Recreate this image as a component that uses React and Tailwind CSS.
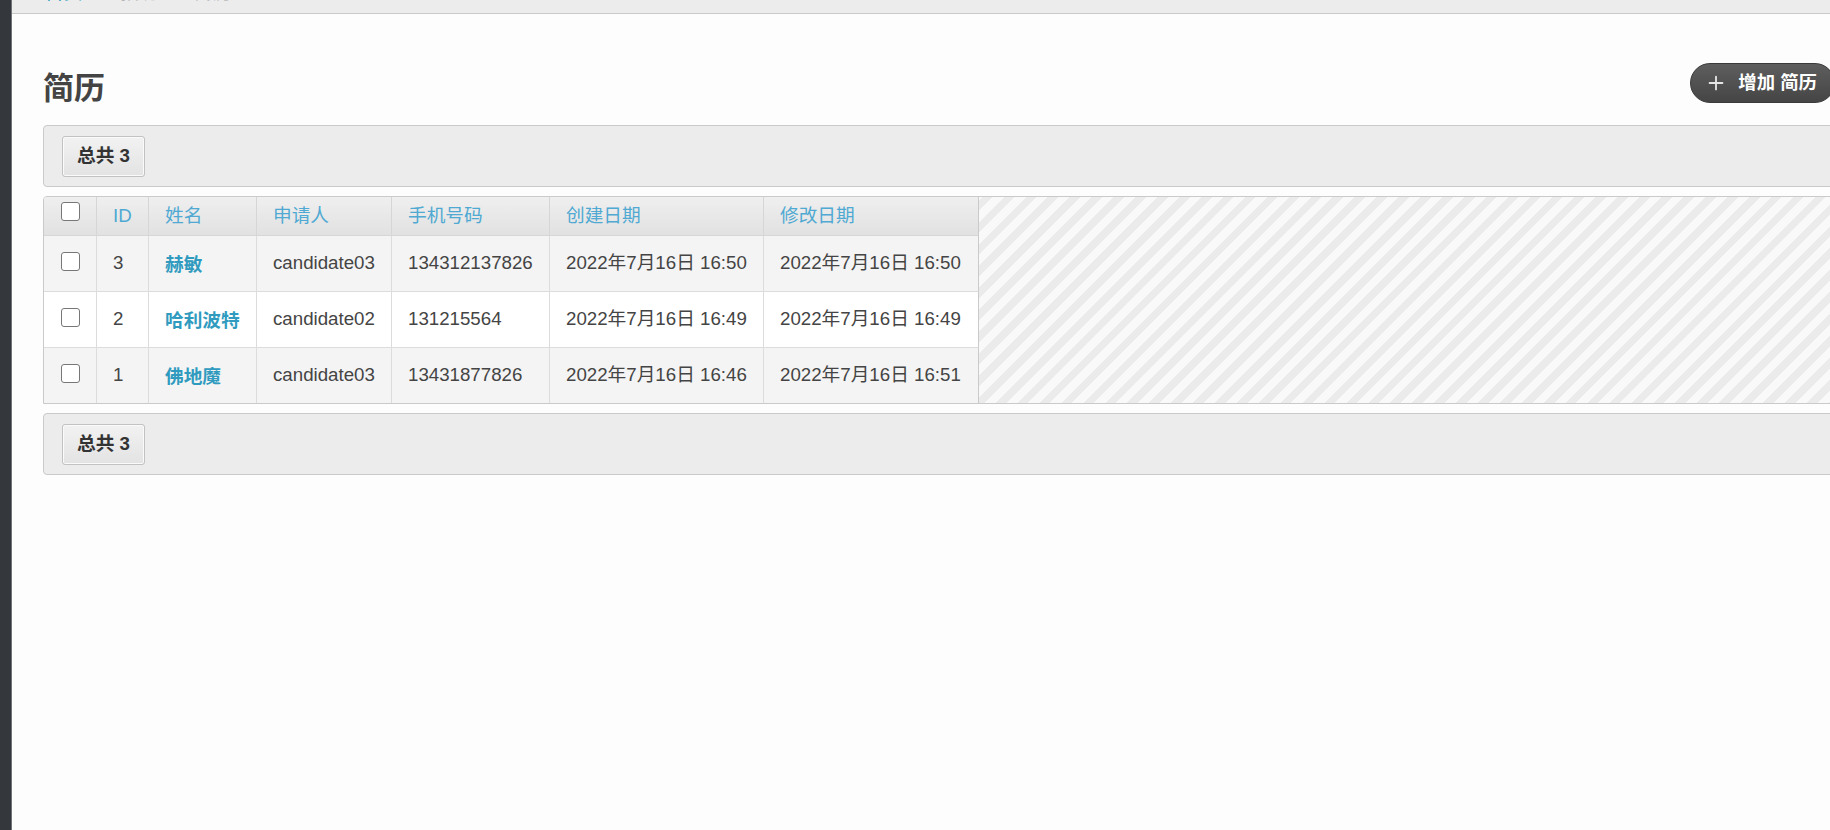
import { Plus } from 'lucide-react'

const rows = [
  { id: 3, name: '赫敏', applicant: 'candidate03', phone: '134312137826', created: '2022年7月16日 16:50', modified: '2022年7月16日 16:50' },
  { id: 2, name: '哈利波特', applicant: 'candidate02', phone: '131215564', created: '2022年7月16日 16:49', modified: '2022年7月16日 16:49' },
  { id: 1, name: '佛地魔', applicant: 'candidate03', phone: '13431877826', created: '2022年7月16日 16:46', modified: '2022年7月16日 16:51' },
]

function Checkbox() {
  return <span className="block w-[19px] h-[19px] rounded-[3px] border-[1.5px] border-[#777] bg-white" />
}

function TotalBar() {
  return (
    <div className="h-[62px] flex items-center pl-[18px] bg-[#ececec] border border-[#cacaca] rounded-[4px]">
      <span className="h-[41px] px-[14px] flex items-center rounded-[3px] border border-[#c2c2c2] shadow-[inset_0_0_0_1px_#fafafa] bg-gradient-to-b from-[#f2f2f2] to-[#e3e3e3] text-[18.7px] font-bold text-[#333]">
        总共 3
      </span>
    </div>
  )
}

export default function App() {
  const th = 'h-[39px] px-[16px] text-left align-middle font-normal text-[#4fa9d2] border-r border-b border-[#d6d6d6] whitespace-nowrap'
  const td = 'px-[16px] align-middle border-r border-[#dcdcdc] whitespace-nowrap'

  return (
    <div className="flex w-[1830px] h-[830px] overflow-hidden bg-[#fdfdfd] text-[#444] font-['Liberation_Sans','Noto_Sans_CJK_SC',sans-serif]">
      {/* 左侧深色边栏 */}
      <div className="w-[12px] shrink-0 bg-[#34373c] border-r border-[#6f7278]" />

      <div className="flex-1 min-w-0 flex flex-col">
        {/* 面包屑 */}
        <div className="h-[14px] shrink-0 overflow-hidden bg-[#ececec] border-b border-[#c9c9c9]">
          <div className="flex items-end -mt-[16px] pl-[33px] text-[18.7px] leading-[18px]">
            <span className="text-[#309bbf]">首页</span>
            <span className="ml-[10px] text-[#aaa]">›</span>
            <span className="ml-[22px] text-[#b5b5b5]">招聘</span>
            <span className="ml-[10px] text-[#aaa]">›</span>
            <span className="ml-[20px] text-[#444]">简历</span>
          </div>
        </div>

        <div className="pl-[31px] -mr-[10px]">
          {/* 标题 */}
          <div className="mt-[49px] h-[40px] flex justify-between items-start">
            <h1 className="mt-[6px] text-[31px] leading-[40px] font-bold text-[#444]">简历</h1>
            <button className="mr-[5px] h-[40px] pl-[14px] pr-[17px] flex items-center gap-[11px] rounded-full border border-[#3a3a3a] bg-gradient-to-b from-[#5e5e5e] to-[#454545] text-white text-[18.4px] font-bold">
              <Plus size={22} strokeWidth={2} className="text-[#e6e6e6]" />
              增加 简历
            </button>
          </div>

          <div className="mt-[22px]">
            <TotalBar />
          </div>

          {/* 表格 */}
          <div className="mt-[9px] flex border border-[#cacaca] rounded-tl-[4px] overflow-hidden">
            <table className="border-separate border-spacing-0 text-[18.7px] shrink-0">
              <thead>
                <tr className="bg-gradient-to-b from-[#efefef] to-[#e1e1e1]">
                  <th className={`${th} w-[53px] align-top pt-[5px] !pl-[17px] !pr-[15px]`}>
                    <Checkbox />
                  </th>
                  <th className={`${th} w-[52px]`}>ID</th>
                  <th className={`${th} w-[108px]`}>姓名</th>
                  <th className={`${th} w-[135px]`}>申请人</th>
                  <th className={`${th} w-[158px]`}>手机号码</th>
                  <th className={`${th} w-[214px]`}>创建日期</th>
                  <th className={`${th} w-[215px] border-r-[#cacaca]`}>修改日期</th>
                </tr>
              </thead>
              <tbody>
                {rows.map((r, i) => {
                  const last = i === rows.length - 1
                  const rowBg = i === 1 ? 'bg-white' : 'bg-[#f4f4f4]'
                  const h = last ? 'h-[55px]' : 'h-[56px] border-b'
                  return (
                    <tr key={r.id} className={rowBg}>
                      <td className={`${td} ${h} !pl-[17px] !pr-[15px]`}>
                        <span className="block -mt-[4px]"><Checkbox /></span>
                      </td>
                      <td className={`${td} ${h}`}>{r.id}</td>
                      <td className={`${td} ${h} pt-[3px] font-bold text-[#309bbf]`}>{r.name}</td>
                      <td className={`${td} ${h}`}>{r.applicant}</td>
                      <td className={`${td} ${h}`}>{r.phone}</td>
                      <td className={`${td} ${h}`}>{r.created}</td>
                      <td className={`${td} ${h} border-r-[#cacaca]`}>{r.modified}</td>
                    </tr>
                  )
                })}
              </tbody>
            </table>
            <div className="flex-1 bg-[repeating-linear-gradient(-45deg,#ebebeb_0px,#ebebeb_7.5px,#f9f9f9_7.5px,#f9f9f9_15.5px)]" />
          </div>

          <div className="mt-[9px]">
            <TotalBar />
          </div>
        </div>
      </div>
    </div>
  )
}
